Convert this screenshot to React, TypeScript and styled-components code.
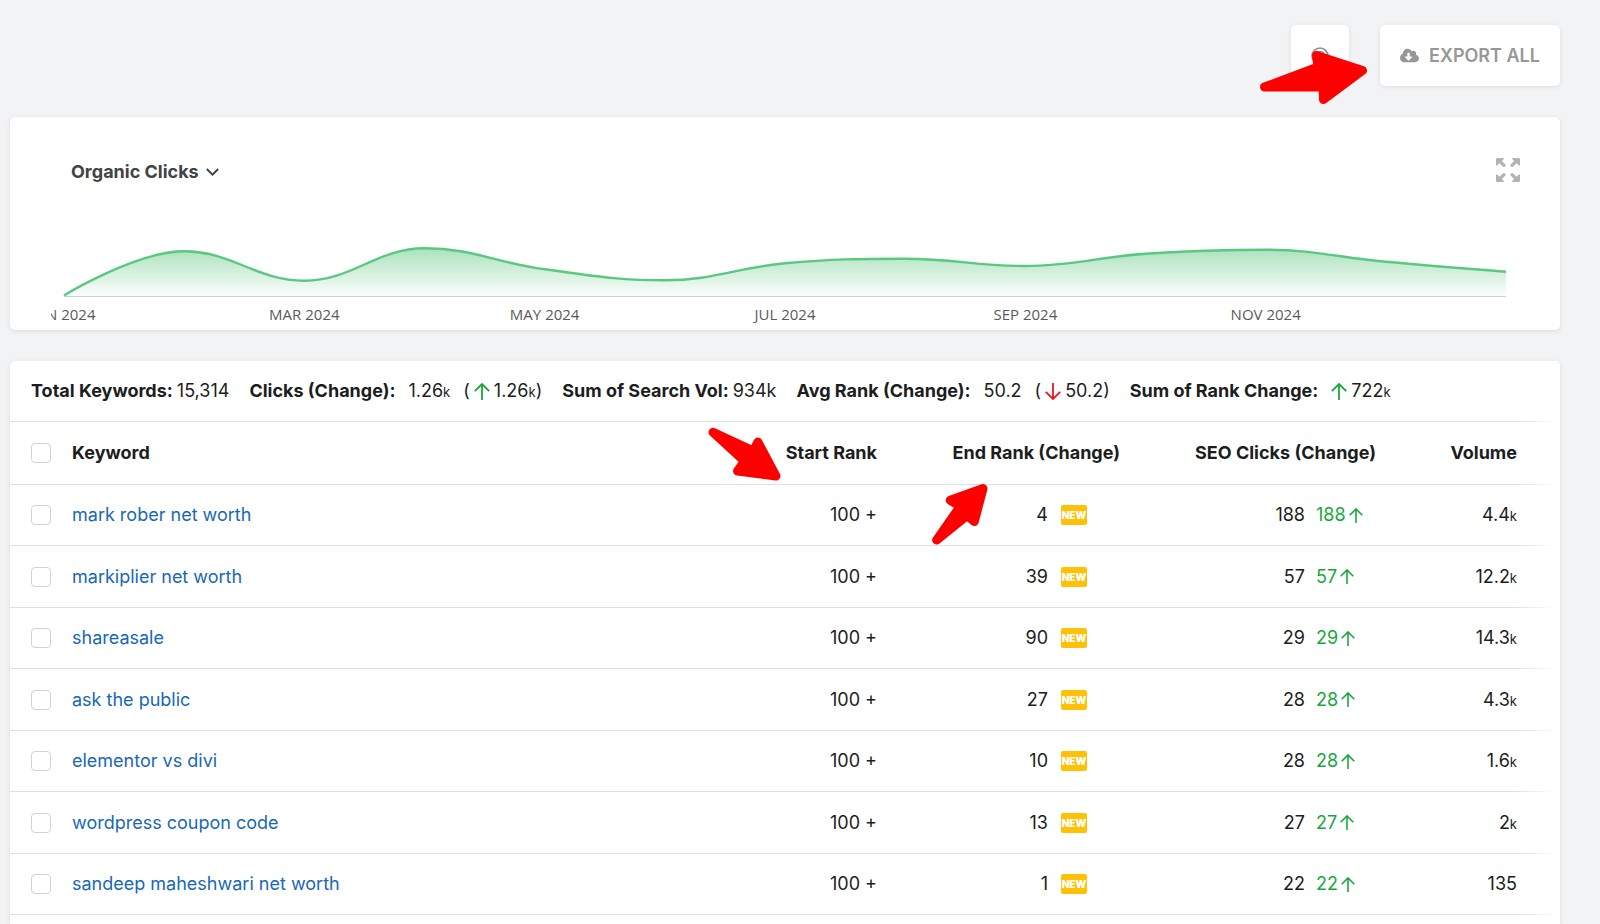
import React from "react";
import styled, { createGlobalStyle } from "styled-components";
import { FaCloudDownloadAlt } from "react-icons/fa";

const GlobalStyle = createGlobalStyle`
  *, *::before, *::after { box-sizing: border-box; }
  body {
    margin: 0;
    background: #f2f3f5;
    color: #1b1d20;
    font-family: Inter, "Liberation Sans", sans-serif;
    font-size: 18px;
    line-height: 24px;
  }
`;

const Page = styled.main`
  position: relative;
  display: flex;
  flex-direction: column;
  height: 100vh;
  overflow: hidden;
  padding: 25px 40px 0 10px;
`;

const Toolbar = styled.header`
  display: flex;
  justify-content: flex-end;
  gap: 31px;
  margin-bottom: 31px;
`;

const ToolButton = styled.button<{ $iconOnly?: boolean }>`
  display: flex;
  align-items: center;
  justify-content: center;
  gap: 10px;
  height: 61px;
  width: ${(p) => (p.$iconOnly ? "58px" : "180px")};
  border: 0;
  border-radius: 5px;
  background: #fff;
  color: #979797;
  box-shadow: 0 1px 4px rgba(30, 40, 60, 0.1);
  font: inherit;
  font-weight: 600;
  white-space: nowrap;
  cursor: pointer;
`;

const Card = styled.section`
  border-radius: 5px;
  background: #fff;
  box-shadow: 0 1px 4px rgba(30, 40, 60, 0.12);
`;

const ChartCard = styled(Card)`
  flex: none;
  height: 213px;
  margin-bottom: 31px;
  padding-top: 41px;
`;

const ChartHead = styled.div`
  display: flex;
  align-items: flex-start;
  justify-content: space-between;
  padding: 0 40px 0 61px;
`;

const MetricButton = styled.button`
  display: flex;
  align-items: center;
  gap: 7px;
  padding: 2px 0;
  border: 0;
  background: none;
  color: #414345;
  font: inherit;
  font-weight: 700;
  cursor: pointer;
`;

const ExpandButton = styled.button`
  display: flex;
  padding: 0;
  border: 0;
  background: none;
  color: #b3b3b3;
  cursor: pointer;
`;

const Plot = styled.figure`
  overflow: hidden;
  margin: 51px 54px 0 41px;
  padding-left: 13px;
`;

const PlotSvg = styled.svg`
  display: block;
  width: 100%;
  height: 60px;
  overflow: visible;
`;

const AxisLabels = styled.div`
  display: grid;
  grid-template-columns: repeat(6, 1fr);
  justify-items: start;
  padding-top: 5px;
  color: #5a5a5a;
  font-family: "Open Sans", "Noto Sans", sans-serif;
  font-size: 15px;
  line-height: 24px;

  span {
    transform: translateX(-50%);
    white-space: nowrap;
  }
`;

const TableCard = styled(Card)`
  position: relative;
  flex: 1;
  min-height: 0;
  overflow: hidden;
  border-radius: 5px 5px 0 0;

  &::after {
    content: "";
    position: absolute;
    top: 0;
    right: 0;
    bottom: 0;
    width: 42px;
    background: linear-gradient(to right, rgba(255, 255, 255, 0), #fff 90%);
    pointer-events: none;
  }
`;

const Summary = styled.div`
  display: flex;
  align-items: center;
  gap: 20px;
  height: 61px;
  padding: 0 21px;
  border-bottom: 1px solid #dde1e6;
  white-space: nowrap;
`;

const Stat = styled.div<{ $gap: number }>`
  display: flex;
  gap: ${(p) => p.$gap}px;

  strong {
    font-weight: 700;
  }
`;

const Amount = styled.span`
  display: inline-flex;
  align-items: center;
  gap: 4px;
`;

const Unit = styled.small`
  font-size: 13px;
  line-height: 1;
`;

const Table = styled.table`
  width: 100%;
  border-collapse: separate;
  border-spacing: 0;
  table-layout: fixed;

  tr {
    height: 61px;
  }
  thead tr {
    height: 63px;
  }
  tbody tr:nth-child(even) {
    height: 62px;
  }
  th,
  td {
    padding: 0;
    border-bottom: 1px solid #dde1e6;
    text-align: right;
    vertical-align: middle;
    white-space: nowrap;
  }
  th {
    font-weight: 700;
  }
`;

const Col = styled.col<{ $width?: number }>`
  width: ${(p) => (p.$width ? `${p.$width}px` : "auto")};
`;

const TextHead = styled.th`
  && {
    text-align: left;
  }
`;

const KeywordCell = styled.th`
  && {
    text-align: left;
    font-weight: 400;
  }
`;

const VolumeHead = styled.th`
  && {
    padding-right: 43px;
  }
`;

const VolumeCell = styled.td`
  && {
    padding-right: 43px;
  }
`;

const Tick = styled.input`
  display: block;
  appearance: none;
  width: 20px;
  height: 20px;
  margin: 0 0 0 21px;
  border: 1px solid #cdd2db;
  border-radius: 4px;
  background: #fff;

  &:checked {
    background: #1868b7;
  }
`;

const KeywordLink = styled.a`
  color: #1868b7;
  text-decoration: none;
`;

const EndRank = styled.div`
  display: flex;
  align-items: center;
  justify-content: flex-end;
  gap: 13px;
  padding-right: 33px;
`;

const NewBadge = styled.span`
  display: flex;
  align-items: center;
  justify-content: center;
  width: 26px;
  height: 20px;
  border-radius: 2px;
  background: #ffc107;
  color: #fff;
  font-size: 10px;
  font-weight: 900;
  line-height: 20px;
`;

const Clicks = styled.div`
  display: flex;
  justify-content: flex-end;
  gap: 11px;
`;

const Gain = styled.span`
  display: flex;
  align-items: center;
  gap: 3px;
  width: 60px;
  color: #17a83b;
`;

const Pointer = styled.svg<{ $top: number; $right: number }>`
  position: absolute;
  top: ${(p) => p.$top}px;
  right: ${(p) => p.$right}px;
  fill: #f00;
  stroke: #f00;
  stroke-width: 9;
  stroke-linejoin: round;
  pointer-events: none;
`;

const VerticalArrow = ({ size, down }: { size: number; down?: boolean }) => (
  <svg
    width={size}
    height={size + 1}
    viewBox="0 0 16 17"
    fill="none"
    stroke={down ? "#f01420" : "#17a83b"}
    strokeWidth="1.8"
    aria-hidden="true"
  >
    <path d={down ? "M8 0v16M.8 8.8 8 16l7.2-7.2" : "M8 17V1M.8 8.2 8 1l7.2 7.2"} />
  </svg>
);

const EyeIcon = () => (
  <svg width="22" height="18" viewBox="0 0 22 18" fill="none" stroke="#8a8c8f" strokeWidth="1.6" aria-hidden="true">
    <circle cx="11" cy="9" r="8" />
    <circle cx="11" cy="9" r="4.5" />
  </svg>
);

const ChevronIcon = () => (
  <svg width="13" height="8" viewBox="0 0 13 8" fill="none" stroke="currentColor" strokeWidth="1.9" aria-hidden="true">
    <path d="M.8 1 6.5 6.7 12.2 1" />
  </svg>
);

const ExpandIcon = () => {
  const corner = "M1 0H7.500L8 .8 6 3 9.600 6.800Q10 7.500 9.300 8.300T7.500 9L3.300 5.200 1 7.800 0 7.200V1Z";
  return (
    <svg width="24" height="24" viewBox="0 0 24 24" fill="currentColor" aria-hidden="true">
      <path d={corner} />
      <path d={corner} transform="matrix(-1 0 0 1 24 0)" />
      <path d={corner} transform="matrix(1 0 0 -1 0 24)" />
      <path d={corner} transform="matrix(-1 0 0 -1 24 24)" />
    </svg>
  );
};

type Point = [number, number];

const plotWidth = 1442;
const baseline = 59;
const levels = [58.5, 14.3, 43.7, 11.3, 32.3, 43.3, 26.3, 21.7, 29, 16.7, 12.7, 24.7, 34.7];
const points: Point[] = levels.map((y, i) => [(i * plotWidth) / (levels.length - 1), y]);

/* Spline whose control points never overshoot the neighbouring values. */
function splinePath(pts: Point[]): string {
  const handles = pts.map(([x, y], i) => {
    if (i === 0 || i === pts.length - 1) return { left: [x, y], right: [x, y] };
    const [px, py] = pts[i - 1];
    const [nx, ny] = pts[i + 1];
    const s = 1.5;
    const lx = (s * x + px) / (s + 1);
    let ly = (s * y + py) / (s + 1);
    const rx = (s * x + nx) / (s + 1);
    let ry = (s * y + ny) / (s + 1);
    const shift = ((ry - ly) * (rx - x)) / (rx - lx) + y - ry;
    ly += shift;
    ry += shift;
    if (ly > py && ly > y) {
      ly = Math.max(py, y);
      ry = 2 * y - ly;
    } else if (ly < py && ly < y) {
      ly = Math.min(py, y);
      ry = 2 * y - ly;
    }
    if (ry > ny && ry > y) {
      ry = Math.max(ny, y);
      ly = 2 * y - ry;
    } else if (ry < ny && ry < y) {
      ry = Math.min(ny, y);
      ly = 2 * y - ry;
    }
    return { left: [lx, ly], right: [rx, ry] };
  });
  return pts
    .map(([x, y], i) => (i === 0 ? `M${x} ${y}` : `C${handles[i - 1].right} ${handles[i].left} ${x},${y}`))
    .join("");
}

const line = splinePath(points);
const months = ["JAN 2024", "MAR 2024", "MAY 2024", "JUL 2024", "SEP 2024", "NOV 2024"];

const rows = [
  { keyword: "mark rober net worth", end: 4, clicks: 188, volume: "4.4", unit: "k" },
  { keyword: "markiplier net worth", end: 39, clicks: 57, volume: "12.2", unit: "k" },
  { keyword: "shareasale", end: 90, clicks: 29, volume: "14.3", unit: "k" },
  { keyword: "ask the public", end: 27, clicks: 28, volume: "4.3", unit: "k" },
  { keyword: "elementor vs divi", end: 10, clicks: 28, volume: "1.6", unit: "k" },
  { keyword: "wordpress coupon code", end: 13, clicks: 27, volume: "2", unit: "k" },
  { keyword: "sandeep maheshwari net worth", end: 1, clicks: 22, volume: "135", unit: "" },
];

export default function App() {
  return (
    <Page>
      <GlobalStyle />
      <Toolbar>
        <ToolButton $iconOnly aria-label="Visibility">
          <EyeIcon />
        </ToolButton>
        <ToolButton>
          <FaCloudDownloadAlt size={19} aria-hidden="true" />
          EXPORT ALL
        </ToolButton>
      </Toolbar>

      <ChartCard>
        <ChartHead>
          <MetricButton>
            Organic Clicks
            <ChevronIcon />
          </MetricButton>
          <ExpandButton aria-label="Expand chart">
            <ExpandIcon />
          </ExpandButton>
        </ChartHead>
        <Plot>
          <PlotSvg viewBox={`0 0 ${plotWidth} 60`} preserveAspectRatio="none" role="img" aria-label="Organic clicks by month">
            <defs>
              <linearGradient id="area" x1="0" y1="11" x2="0" y2="59" gradientUnits="userSpaceOnUse">
                <stop offset="0" stopColor="#55c47a" stopOpacity="0.5" />
                <stop offset="1" stopColor="#55c47a" stopOpacity="0.02" />
              </linearGradient>
            </defs>
            <path d={`${line}V${baseline}H0Z`} fill="url(#area)" />
            <path d={`M0 59.5H${plotWidth}`} stroke="#c3d0e8" strokeWidth="1" />
            <path d={line} fill="none" stroke="#5bc880" strokeWidth="2.4" vectorEffect="non-scaling-stroke" />
          </PlotSvg>
          <AxisLabels>
            {months.map((m) => (
              <span key={m}>{m}</span>
            ))}
          </AxisLabels>
        </Plot>
      </ChartCard>

      <TableCard>
        <Summary>
          <Stat $gap={4}>
            <strong>Total Keywords:</strong>
            <span>15,314</span>
          </Stat>
          <Stat $gap={13}>
            <strong>Clicks (Change):</strong>
            <span>
              1.26<Unit>k</Unit>
            </span>
            <Amount>
              (<VerticalArrow size={16} />
              <span>
                1.26<Unit>k</Unit>)
              </span>
            </Amount>
          </Stat>
          <Stat $gap={4}>
            <strong>Sum of Search Vol:</strong>
            <span>934k</span>
          </Stat>
          <Stat $gap={13}>
            <strong>Avg Rank (Change):</strong>
            <span>50.2</span>
            <Amount>
              (<VerticalArrow size={16} down />
              50.2)
            </Amount>
          </Stat>
          <Stat $gap={13}>
            <strong>Sum of Rank Change:</strong>
            <Amount>
              <VerticalArrow size={16} />
              <span>
                722<Unit>k</Unit>
              </span>
            </Amount>
          </Stat>
        </Summary>
        <Table>
          <colgroup>
            <Col $width={62} />
            <Col />
            <Col $width={200} />
            <Col $width={243} />
            <Col $width={256} />
            <Col $width={184} />
          </colgroup>
          <thead>
            <tr>
              <th>
                <Tick type="checkbox" aria-label="Select all keywords" />
              </th>
              <TextHead>Keyword</TextHead>
              <th>Start Rank</th>
              <th>End Rank (Change)</th>
              <th>SEO Clicks (Change)</th>
              <VolumeHead>Volume</VolumeHead>
            </tr>
          </thead>
          <tbody>
            {rows.map((row) => (
              <tr key={row.keyword}>
                <td>
                  <Tick type="checkbox" aria-label={`Select ${row.keyword}`} />
                </td>
                <KeywordCell scope="row">
                  <KeywordLink href="#">{row.keyword}</KeywordLink>
                </KeywordCell>
                <td>100 +</td>
                <td>
                  <EndRank>
                    {row.end}
                    <NewBadge>NEW</NewBadge>
                  </EndRank>
                </td>
                <td>
                  <Clicks>
                    <span>{row.clicks}</span>
                    <Gain>
                      {row.clicks}
                      <VerticalArrow size={14} />
                    </Gain>
                  </Clicks>
                </td>
                <VolumeCell>
                  {row.volume}
                  {row.unit && <Unit>{row.unit}</Unit>}
                </VolumeCell>
              </tr>
            ))}
          </tbody>
        </Table>
      </TableCard>

      <Pointer $top={50} $right={230} width="110" height="55" viewBox="1260 50 110 55" aria-hidden="true">
        <path d="M1264.5 87 1318 67 1316.5 55.5 1362.5 70.5 1323.5 99.5 1323 87Z" />
      </Pointer>
      <Pointer $top={425} $right={815} width="80" height="60" viewBox="705 425 80 60" aria-hidden="true">
        <path d="M713 432.3 753.5 451.2 757.9 442 776 476 737.5 471 744.5 461.2Z" />
      </Pointer>
      <Pointer $top={480} $right={610} width="60" height="70" viewBox="930 480 60 70" aria-hidden="true">
        <path d="M936.7 540 960.3 506.2 950.3 500.3 983 488.5 974.3 521.5 967.1 515.6Z" />
      </Pointer>
    </Page>
  );
}
